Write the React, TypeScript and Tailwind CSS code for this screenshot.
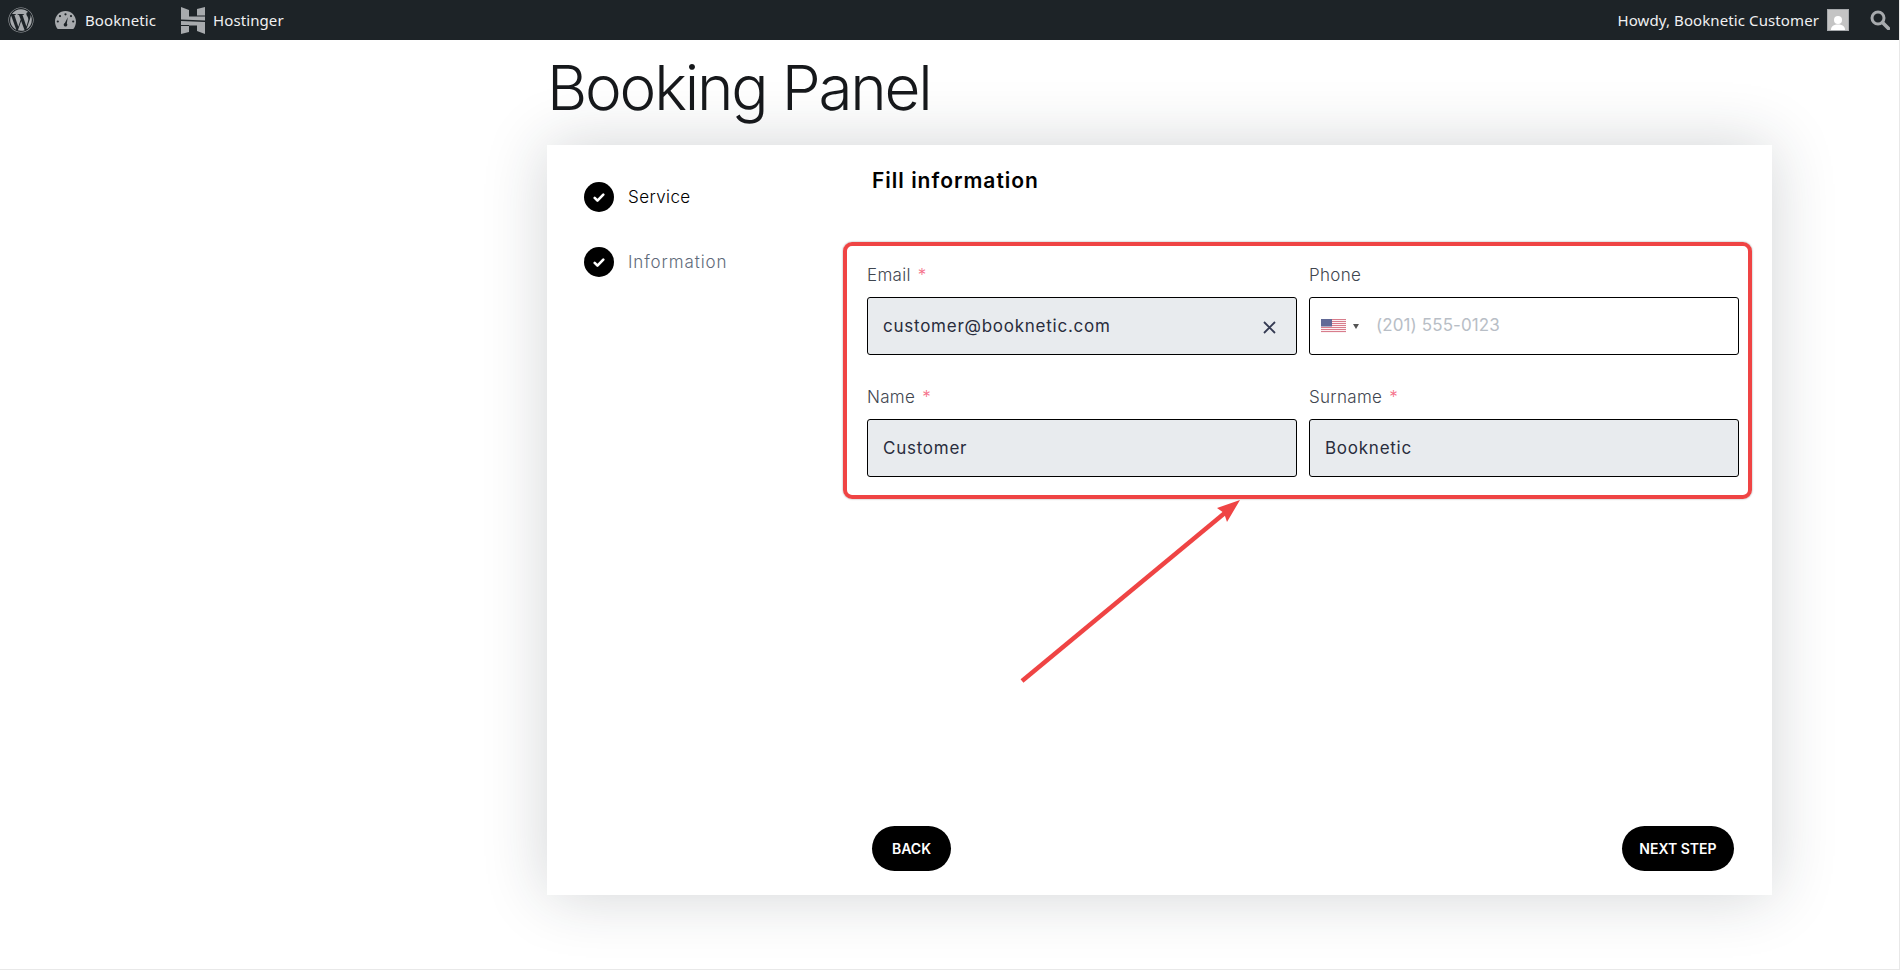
import React from 'react';
import { FaWordpress } from 'react-icons/fa';

const sans = "font-['Inter','Open_Sans',sans-serif]";

const Check = () => (
  <span className="flex h-[30px] w-[30px] items-center justify-center rounded-full bg-black">
    <svg width="12" height="11" viewBox="0 0 14 12" fill="none">
      <path d="M2 6.500l3.200 3.200L12 2.600" stroke="#fff" strokeWidth="3" strokeLinecap="round" strokeLinejoin="round" />
    </svg>
  </span>
);

const Label = ({ text, required }: { text: string; required?: boolean }) => (
  <div className="mb-[10px] flex h-6 items-center pt-[2px] text-[17px] font-light tracking-[0.3px] text-[#3f4650]">
    {text}
    {required && <span className="ml-[7px] text-[#f5708a]">*</span>}
  </div>
);

const Filled = ({ value, clear }: { value: string; clear?: boolean }) => (
  <div className="relative">
    <input
      readOnly
      value={value}
      className="h-[58px] w-full rounded-[3px] border border-black bg-[#e8ebee] pl-[15px] pr-10 text-[17px] tracking-[0.75px] text-[#292d3d] outline-none"
    />
    {clear && (
      <svg className="absolute right-[21px] top-[24px]" width="13" height="13" viewBox="0 0 13 13" fill="none">
        <path d="M1 1l11 11M12 1L1 12" stroke="#343a52" strokeWidth="1.8" />
      </svg>
    )}
  </div>
);

const Flag = () => (
  <svg width="25" height="14" viewBox="0 0 25 14" className="opacity-70">
    <rect width="25" height="14" fill="#fff" />
    {[0, 2, 4, 6, 8, 10, 12].map((y) => (
      <rect key={y} y={y} width="25" height="1.1" fill="#c8475c" />
    ))}
    <rect width="11" height="7.5" fill="#1f2a6b" />
  </svg>
);

export default function App() {
  return (
    <div className={`relative h-[970px] overflow-hidden border-b border-r border-[#e8e8e8] bg-white ${sans}`}>
      <header className="flex h-10 items-center justify-between bg-[#1d2327] font-['Noto_Sans',sans-serif] text-[15px] tracking-[0.1px] text-[#f0f0f1]">
        <div className="flex items-center">
          <FaWordpress className="ml-2 text-[26px] text-[#a7aaad]" />
          <svg className="ml-[21px]" width="21" height="18" viewBox="0 0 21 18">
            <path
              fillRule="evenodd"
              fill="#a7aaad"
              d="M10.5 0C4.7 0 0 4.7 0 10.5c0 2.9 1 5.5 2.7 7.5h15.6c1.7-2 2.7-4.600 2.700-7.500C21 4.700 16.300 0 10.500 0zM10.500 2.200a1.100 1.100 0 110 2.200 1.100 1.100 0 010-2.200zM5 4a1.100 1.100 0 110 2.200A1.100 1.100 0 015 4zm11 0a1.100 1.100 0 110 2.200A1.100 1.100 0 0116 4zM2.800 9.400a1.100 1.100 0 110 2.200 1.100 1.100 0 010-2.200zm15.400 0a1.100 1.100 0 110 2.200 1.100 1.100 0 010-2.200zM12.800 6.200l-1 6.300a1.800 1.800 0 01.500 1.300c0 1-.8 1.800-1.800 1.800s-1.800-.8-1.800-1.800c0-.8.500-1.500 1.200-1.700z"
            />
          </svg>
          <span className="ml-[9px] w-[71px] whitespace-nowrap">Booknetic</span>
          <svg className="ml-[25px]" width="24" height="27" viewBox="0 0 24 27" fill="#a7aaad">
            <path d="M0 0L8 3V9.500H24V13.500L0 12.500z" />
            <path d="M16 2L24 0V8.500H16z" />
            <path d="M0 14L24 15V27L16 24V18.500H8V18H0z" />
            <path d="M0 19H8V25L0 27z" />
          </svg>
          <span className="ml-[8px]">Hostinger</span>
        </div>
        <div className="flex items-center">
          <span>Howdy, Booknetic Customer</span>
          <span className="ml-2 flex h-[22px] w-[22px] items-end justify-center overflow-hidden border border-[#a7aaad] bg-[#c4c4c4]">
            <svg width="16" height="16" viewBox="0 0 16 16" fill="#fff">
              <circle cx="8" cy="6" r="4" />
              <path d="M1 16c0-4 3-5.500 7-5.500s7 1.500 7 5.500z" />
            </svg>
          </span>
          <svg className="ml-[21px] mr-[9px]" width="20" height="20" viewBox="0 0 20 20" fill="none" stroke="#a7aaad">
            <circle cx="8" cy="8" r="6" strokeWidth="3" />
            <path d="M12.500 12.500L18.500 18.500" strokeWidth="3.600" strokeLinecap="round" />
          </svg>
        </div>
      </header>

      <main className="ml-[547px] w-[1225px]">
        <h1 className="flex h-[105px] items-center pb-[10px] text-[62px] font-light leading-none tracking-[-2.2px] text-[#16181b]">
          Booking Panel
        </h1>
        <section className="flex h-[750px] bg-white shadow-[0_0_60px_rgba(30,40,50,0.2)]">
          <aside className="w-[320px] shrink-0 pl-[37px] pt-[37px]">
            <div className="flex h-[30px] items-center gap-[14px] text-[17px] font-light tracking-[0.4px] text-black">
              <Check />
              <span className="mt-[2px]">Service</span>
            </div>
            <div className="mt-[35px] flex h-[30px] items-center gap-[14px] text-[17px] font-light tracking-[0.9px] text-[#5f6b7a]">
              <Check />
              <span className="mt-[2px]">Information</span>
            </div>
          </aside>
          <div className="flex flex-1 flex-col pr-[33px] pt-[21px]">
            <h2 className="ml-[5px] h-[30px] text-[21px] font-semibold leading-[30px] tracking-[1px] text-black">Fill information</h2>
            <div className="mt-[67px] grid grid-cols-2 gap-x-3 gap-y-[30px]">
              <div>
                <Label text="Email" required />
                <Filled value="customer@booknetic.com" clear />
              </div>
              <div>
                <Label text="Phone" />
                <div className="flex h-[58px] items-center rounded-[3px] border border-black bg-white pl-[11px]">
                  <Flag />
                  <span className="ml-[7px] h-0 w-0 border-x-[3px] border-t-[5px] border-x-transparent border-t-[#555]" />
                  <input
                    readOnly
                    placeholder="(201) 555-0123"
                    className="ml-[17px] flex-1 text-[17px] tracking-[0.1px] outline-none placeholder:text-[#b8bec6]"
                  />
                </div>
              </div>
              <div>
                <Label text="Name" required />
                <Filled value="Customer" />
              </div>
              <div>
                <Label text="Surname" required />
                <Filled value="Booknetic" />
              </div>
            </div>
            <div className="mb-6 mt-auto flex justify-between px-[5px]">
              <button className="h-[45px] w-[79px] rounded-full bg-black text-[14px] font-semibold text-white">BACK</button>
              <button className="h-[45px] w-[112px] rounded-full bg-black text-[14px] font-semibold text-white">NEXT STEP</button>
            </div>
          </div>
        </section>
      </main>

      {/* red annotation drawn over the form */}
      <div className="pointer-events-none absolute left-[843px] top-[242px] h-[257px] w-[909px] rounded-[9px] border-4 border-[#ef4444] shadow-[0_0_2px_rgba(0,0,0,0.4)]" />
      <svg className="pointer-events-none absolute left-[1010px] top-[495px]" width="245" height="195" viewBox="0 0 245 195" fill="none">
        <path d="M12 186L222 12" stroke="#ef4444" strokeWidth="4.500" />
        <path d="M230 5L207 13L214 18L217 27z" fill="#ef4444" />
      </svg>
    </div>
  );
}
